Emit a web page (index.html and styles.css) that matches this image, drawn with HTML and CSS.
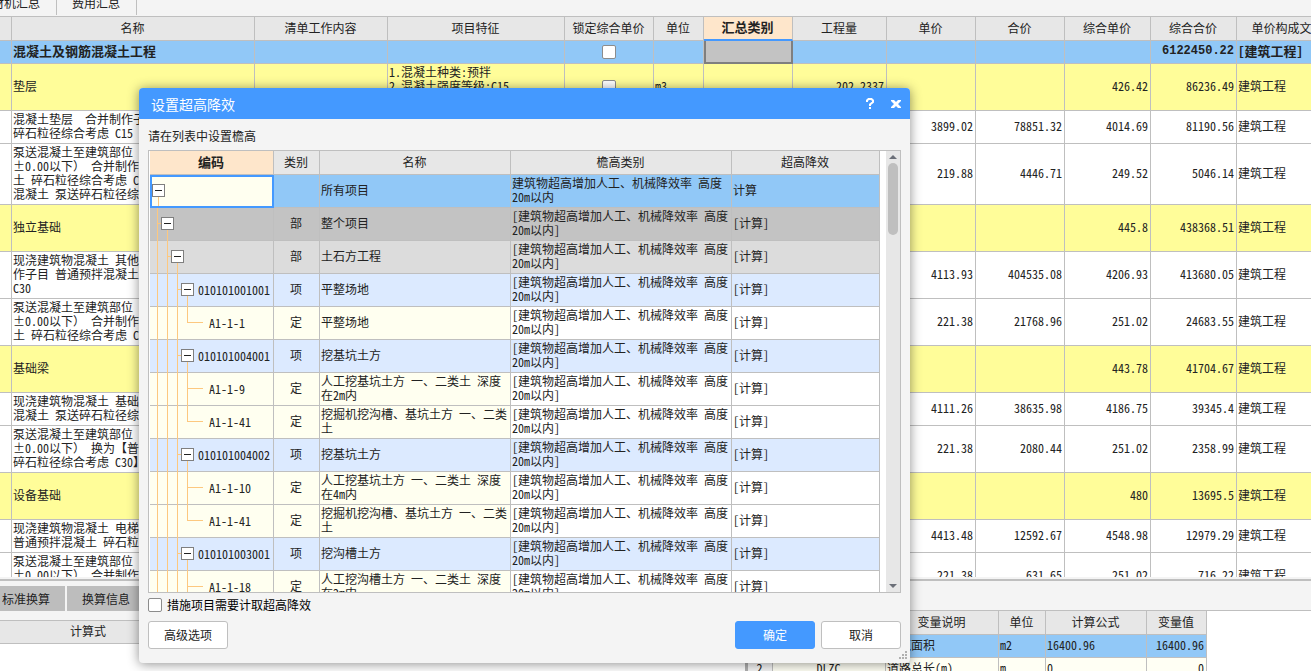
FILE: index.html
```html
<!DOCTYPE html>
<html lang="zh-CN">
<head>
<meta charset="utf-8">
<title>设置超高降效</title>
<link rel="stylesheet" href="styles.css">
</head>
<body>
<nav class="top-tabs">
  <button class="top-tab">人材机汇总</button>
  <button class="top-tab">费用汇总</button>
</nav>

<main class="sheet">
  <table class="grid sheet-grid">
    <colgroup>
      <col class="w12"><col class="w243"><col class="w133"><col class="w177"><col class="w89"><col class="w50"><col class="w89"><col class="w94"><col class="w89"><col class="w89"><col class="w86"><col class="w86"><col class="w103">
    </colgroup>
    <thead>
      <tr><th></th><th>名称</th><th>清单工作内容</th><th>项目特征</th><th>锁定综合单价</th><th>单位</th><th class="active">汇总类别</th><th>工程量</th><th>单价</th><th>合价</th><th>综合单价</th><th>综合合价</th><th>单价构成文件</th></tr>
    </thead>
    <tbody>
      <tr class="blue bold"><td></td><td>混凝土及钢筋混凝土工程</td><td></td><td></td><td class="mid"><input type="checkbox" class="check" aria-label="锁定综合单价"></td><td></td><td class="picked"></td><td></td><td></td><td></td><td></td><td class="num">6122450.22</td><td>[建筑工程]</td></tr>
      <tr class="yellow tall"><td></td><td>垫层</td><td></td><td>1.混凝土种类:预拌<br>2.混凝土强度等级:C15<br>&nbsp;</td><td class="mid"><input type="checkbox" class="check" aria-label="锁定综合单价"></td><td>m3</td><td></td><td class="num">202.2337</td><td></td><td></td><td class="num">426.42</td><td class="num">86236.49</td><td>建筑工程</td></tr>
      <tr><td></td><td>混凝土垫层&nbsp; 合并制作子目<br>碎石粒径综合考虑 C15</td><td></td><td></td><td></td><td></td><td></td><td></td><td class="num">3899.02</td><td class="num">78851.32</td><td class="num">4014.69</td><td class="num">81190.56</td><td>建筑工程</td></tr>
      <tr><td></td><td>泵送混凝土至建筑部位<br>±0.00以下） 合并制作<br>土 碎石粒径综合考虑 C<br>混凝土 泵送碎石粒径综合</td><td></td><td></td><td></td><td></td><td></td><td></td><td class="num">219.88</td><td class="num">4446.71</td><td class="num">249.52</td><td class="num">5046.14</td><td>建筑工程</td></tr>
      <tr class="yellow tall"><td></td><td>独立基础</td><td></td><td></td><td></td><td></td><td></td><td></td><td></td><td></td><td class="num">445.8</td><td class="num">438368.51</td><td>建筑工程</td></tr>
      <tr><td></td><td>现浇建筑物混凝土 其他<br>作子目 普通预拌混凝土<br>C30</td><td></td><td></td><td></td><td></td><td></td><td></td><td class="num">4113.93</td><td class="num">404535.08</td><td class="num">4206.93</td><td class="num">413680.05</td><td>建筑工程</td></tr>
      <tr><td></td><td>泵送混凝土至建筑部位<br>±0.00以下） 合并制作<br>土 碎石粒径综合考虑 C</td><td></td><td></td><td></td><td></td><td></td><td></td><td class="num">221.38</td><td class="num">21768.96</td><td class="num">251.02</td><td class="num">24683.55</td><td>建筑工程</td></tr>
      <tr class="yellow tall"><td></td><td>基础梁</td><td></td><td></td><td></td><td></td><td></td><td></td><td></td><td></td><td class="num">443.78</td><td class="num">41704.67</td><td>建筑工程</td></tr>
      <tr><td></td><td>现浇建筑物混凝土 基础<br>混凝土 泵送碎石粒径综合</td><td></td><td></td><td></td><td></td><td></td><td></td><td class="num">4111.26</td><td class="num">38635.98</td><td class="num">4186.75</td><td class="num">39345.4</td><td>建筑工程</td></tr>
      <tr><td></td><td>泵送混凝土至建筑部位<br>±0.00以下） 换为【普<br>碎石粒径综合考虑 C30】</td><td></td><td></td><td></td><td></td><td></td><td></td><td class="num">221.38</td><td class="num">2080.44</td><td class="num">251.02</td><td class="num">2358.99</td><td>建筑工程</td></tr>
      <tr class="yellow tall"><td></td><td>设备基础</td><td></td><td></td><td></td><td></td><td></td><td></td><td></td><td></td><td class="num">480</td><td class="num">13695.5</td><td>建筑工程</td></tr>
      <tr><td></td><td>现浇建筑物混凝土 电梯<br>普通预拌混凝土 碎石粒径</td><td></td><td></td><td></td><td></td><td></td><td></td><td class="num">4413.48</td><td class="num">12592.67</td><td class="num">4548.98</td><td class="num">12979.29</td><td>建筑工程</td></tr>
      <tr><td></td><td>泵送混凝土至建筑部位<br>±0.00以下） 合并制作<br>&nbsp;</td><td></td><td></td><td></td><td></td><td></td><td></td><td class="num">221.38</td><td class="num">631.65</td><td class="num">251.02</td><td class="num">716.22</td><td>建筑工程</td></tr>
    </tbody>
  </table>
</main>

<section class="lower">
  <div class="lower-left">
    <nav class="low-tabs"><button class="low-tab">标准换算</button><button class="low-tab">换算信息</button></nav>
    <table class="grid formula-grid"><colgroup><col class="w178"><col></colgroup><thead><tr><th>计算式</th><th></th></tr></thead></table>
  </div>
  <div class="lower-right">
    <table class="grid var-grid">
      <colgroup><col class="w25"><col class="w113"><col class="w113"><col class="w47"><col class="w101"><col class="w60"></colgroup>
      <thead><tr><th></th><th></th><th>变量说明</th><th>单位</th><th>计算公式</th><th>变量值</th></tr></thead>
      <tbody>
        <tr class="blue"><td></td><td></td><td>建筑面积</td><td>m2</td><td>16400.96</td><td class="num">16400.96</td></tr>
        <tr class="cream"><td class="mid index">2</td><td class="mid">DLZC</td><td>道路总长(m)</td><td>m</td><td>0</td><td class="num">0</td></tr>
      </tbody>
    </table>
  </div>
</section>

<div class="dialog" role="dialog" aria-labelledby="dialog-title">
  <header class="dialog-head">
    <h1 id="dialog-title">设置超高降效</h1>
    <button class="head-btn" aria-label="帮助"><svg width="8" height="12" viewBox="0 0 8 12"><path d="M1 4V2.5L2.500 1H5.500L7 2.500V4L4 6.500V8" fill="none" stroke="#fff" stroke-width="2"/><path d="M3 9h2v2H3z" fill="#fff"/></svg></button>
    <button class="head-btn" aria-label="关闭"><svg width="10" height="10" viewBox="0 0 10 10"><path d="M0 1h3l2 2 2-2h3v1L7 5l3 3v1H7L5 7 3 9H0V8l3-3-3-3z" fill="#fff"/></svg></button>
  </header>
  <p class="hint">请在列表中设置檐高</p>
  <div class="frame">
    <div class="frame-body">
      <table class="grid tree-grid">
        <colgroup><col class="w124"><col class="w46"><col class="w191"><col class="w221"><col></colgroup>
        <thead><tr><th class="active">编码</th><th>类别</th><th>名称</th><th>檐高类别</th><th>超高降效</th></tr></thead>
        <tbody>
          <tr class="blue"><td class="code editing"><div class="tree"><button class="toggle" aria-label="折叠"></button></div></td><td></td><td>所有项目</td><td>建筑物超高增加人工、机械降效率 高度<br>20m以内</td><td>计算</td></tr>
          <tr class="gray"><td class="code"><div class="tree"><i class="tee"></i><button class="toggle" aria-label="折叠"></button></div></td><td class="mid">部</td><td>整个项目</td><td>[建筑物超高增加人工、机械降效率 高度<br>20m以内]</td><td>[计算]</td></tr>
          <tr class="silver"><td class="code"><div class="tree"><i></i><i class="tee"></i><button class="toggle" aria-label="折叠"></button></div></td><td class="mid">部</td><td>土石方工程</td><td>[建筑物超高增加人工、机械降效率 高度<br>20m以内]</td><td>[计算]</td></tr>
          <tr class="pale"><td class="code"><div class="tree"><i></i><i></i><i class="tee"></i><button class="toggle" aria-label="折叠"></button>010101001001</div></td><td class="mid">项</td><td>平整场地</td><td>[建筑物超高增加人工、机械降效率 高度<br>20m以内]</td><td>[计算]</td></tr>
          <tr class="leaf"><td class="code"><div class="tree"><i></i><i></i><i></i><i class="tee long last"></i>A1-1-1</div></td><td class="mid">定</td><td>平整场地</td><td>[建筑物超高增加人工、机械降效率 高度<br>20m以内]</td><td>[计算]</td></tr>
          <tr class="pale"><td class="code"><div class="tree"><i></i><i></i><i class="tee"></i><button class="toggle" aria-label="折叠"></button>010101004001</div></td><td class="mid">项</td><td>挖基坑土方</td><td>[建筑物超高增加人工、机械降效率 高度<br>20m以内]</td><td>[计算]</td></tr>
          <tr class="leaf"><td class="code"><div class="tree"><i></i><i></i><i></i><i class="tee long"></i>A1-1-9</div></td><td class="mid">定</td><td>人工挖基坑土方 一、二类土 深度<br>在2m内</td><td>[建筑物超高增加人工、机械降效率 高度<br>20m以内]</td><td>[计算]</td></tr>
          <tr class="leaf"><td class="code"><div class="tree"><i></i><i></i><i></i><i class="tee long last"></i>A1-1-41</div></td><td class="mid">定</td><td>挖掘机挖沟槽、基坑土方 一、二类<br>土</td><td>[建筑物超高增加人工、机械降效率 高度<br>20m以内]</td><td>[计算]</td></tr>
          <tr class="pale"><td class="code"><div class="tree"><i></i><i></i><i class="tee"></i><button class="toggle" aria-label="折叠"></button>010101004002</div></td><td class="mid">项</td><td>挖基坑土方</td><td>[建筑物超高增加人工、机械降效率 高度<br>20m以内]</td><td>[计算]</td></tr>
          <tr class="leaf"><td class="code"><div class="tree"><i></i><i></i><i></i><i class="tee long"></i>A1-1-10</div></td><td class="mid">定</td><td>人工挖基坑土方 一、二类土 深度<br>在4m内</td><td>[建筑物超高增加人工、机械降效率 高度<br>20m以内]</td><td>[计算]</td></tr>
          <tr class="leaf"><td class="code"><div class="tree"><i></i><i></i><i></i><i class="tee long last"></i>A1-1-41</div></td><td class="mid">定</td><td>挖掘机挖沟槽、基坑土方 一、二类<br>土</td><td>[建筑物超高增加人工、机械降效率 高度<br>20m以内]</td><td>[计算]</td></tr>
          <tr class="pale"><td class="code"><div class="tree"><i></i><i></i><i class="tee"></i><button class="toggle" aria-label="折叠"></button>010101003001</div></td><td class="mid">项</td><td>挖沟槽土方</td><td>[建筑物超高增加人工、机械降效率 高度<br>20m以内]</td><td>[计算]</td></tr>
          <tr class="leaf"><td class="code"><div class="tree"><i></i><i></i><i></i><i class="tee long"></i>A1-1-18</div></td><td class="mid">定</td><td>人工挖沟槽土方 一、二类土 深度<br>在2m内</td><td>[建筑物超高增加人工、机械降效率 高度<br>20m以内]</td><td>[计算]</td></tr>
        </tbody>
      </table>
    </div>
    <div class="scrollbar">
      <svg width="8" height="4" viewBox="0 0 8 4"><path d="M4 0L8 4H0z" fill="#6b6f78"/></svg>
      <div class="thumb"></div>
      <svg width="8" height="4" viewBox="0 0 8 4"><path d="M0 0h8L4 4z" fill="#6b6f78"/></svg>
    </div>
  </div>
  <label class="option"><input type="checkbox" class="check">措施项目需要计取超高降效</label>
  <footer class="actions">
    <button class="btn advanced">高级选项</button>
    <button class="btn primary">确定</button>
    <button class="btn">取消</button>
  </footer>
  <svg class="grip" width="8" height="8" viewBox="0 0 8 8"><path d="M6 0h2v2H6zM3 3h2v2H3zM6 3h2v2H6zM0 6h2v2H0zM3 6h2v2H3zM6 6h2v2H6z" fill="#b0b0b0"/></svg>
</div>
</body>
</html>
```

FILE: styles.css
```css
* { box-sizing: border-box; }

body {
  margin: 0;
  height: 100vh;
  overflow: hidden;
  display: flex;
  flex-direction: column;
  position: relative;
  background: #f4f4f4;
  color: #222;
  font: 12px/14px "Noto Sans Mono CJK SC", "Noto Sans CJK SC", "Liberation Mono", monospace;
}

button { font: inherit; color: inherit; padding: 0; border: 0; background: none; }

/* tab strip above the sheet */
.top-tabs {
  display: flex;
  align-items: flex-end;
  flex: 0 0 15px;
  margin-left: -35px;
  overflow: hidden;
}
.top-tab { flex: none; height: 24px; padding: 0 16px 0 15px; border-right: 1px solid #bfbfbf; }

/* shared table look */
.grid { table-layout: fixed; border-collapse: separate; border-spacing: 0; }
.grid th, .grid td {
  padding: 1px 2px 3px 1px;
  border-right: 1px solid #bfbfbf;
  border-bottom: 1px solid #bfbfbf;
  white-space: nowrap;
  overflow: hidden;
  text-align: left;
}
.grid th { background: #e7e7e7; font-weight: normal; text-align: center; height: 24px; }
.grid th.active { background: #fee6cb; font-weight: bold; font-size: 13px; }
.grid .num { text-align: right; }
.grid .mid { text-align: center; }
.blue td { background: #91c8f7; }
.yellow td { background: #fffd99; }
.gray td { background: #c3c3c3; }
.silver td { background: #dcdcdc; }
.pale td { background: #dceaff; }
.cream td { background: #fffff4; }

.w12 { width: 12px; }
.w25 { width: 25px; }
.w46 { width: 46px; }
.w47 { width: 47px; }
.w50 { width: 50px; }
.w60 { width: 60px; }
.w86 { width: 86px; }
.w89 { width: 89px; }
.w94 { width: 94px; }
.w101 { width: 101px; }
.w103 { width: 103px; }
.w113 { width: 113px; }
.w124 { width: 124px; }
.w133 { width: 133px; }
.w177 { width: 177px; }
.w178 { width: 178px; }
.w191 { width: 191px; }
.w221 { width: 221px; }
.w243 { width: 243px; }

.check {
  appearance: none;
  width: 14px;
  height: 14px;
  margin: 0;
  border: 1px solid #8c8c8c;
  border-radius: 2px;
  background: #fff;
  vertical-align: middle;
}

/* main sheet */
.sheet { flex: 1; min-height: 0; margin-top: 1px; overflow: hidden; background: #fff; border-top: 1px solid #bfbfbf; }
.sheet-grid { width: 1340px; }
.sheet-grid tr.bold { height: 23px; }
.sheet-grid tr.tall { height: 47px; }
.grid .bold td { padding-top: 0; padding-bottom: 2px; font-weight: bold; font-size: 13px; }
.grid .bold .num { font-family: "Liberation Mono", monospace; font-size: 12px; }
.grid .bold .picked { background: #c3c3c3; border: 2px solid #7f7f7f; border-top: 0; }
.sheet-grid th.active { border-bottom: 2px solid #4499ff; }

/* lower panes */
.lower { flex: 0 0 92px; display: flex; margin-top: 2px; border-top: 2px solid #bfbfbf; overflow: hidden; }
.lower-left { flex: 0 0 745px; background: #fff; }
.low-tabs { display: flex; gap: 2px; margin-left: -13px; padding: 5px 0 9px; background: #f4f4f4; }
.low-tab { height: 25px; padding: 0 15px; background: #bdbdbd; }
.formula-grid { width: 100%; }
.formula-grid th { border-top: 1px solid #bfbfbf; }
.lower-right { flex: 1; margin-top: 29px; background: #fff; border-top: 1px solid #bfbfbf; border-left: 3px solid #b0b0b0; }
.var-grid { width: 459px; }
.var-grid tr { height: 23px; }
.grid .index { background: #f4f4f4; }

/* floating dialog window */
.dialog {
  position: absolute;
  left: 139px;
  top: 88px;
  width: 771px;
  height: 575px;
  display: flex;
  flex-direction: column;
  border-radius: 4px;
  background: #f4f4f4;
  box-shadow: 0 1px 12px rgba(0, 0, 0, .45);
}
.dialog-head {
  flex: 0 0 31px;
  display: flex;
  align-items: center;
  gap: 8px;
  padding: 0 5px 0 12px;
  border-radius: 4px 4px 0 0;
  background: #4499ff;
  color: #fff;
}
.dialog-head h1 { flex: 1; margin: 0; font-size: 14px; line-height: 20px; font-weight: normal; }
.head-btn { width: 18px; height: 18px; display: grid; place-items: center; }
.hint { margin: 0; padding: 10px 9px 7px; }
.frame { flex: 1; min-height: 0; margin: 0 9px; display: flex; border: 1px solid #bfbfbf; background: #fff; }
.frame-body { flex: 1; min-width: 0; overflow: hidden; padding: 0 6px 0 1px; }
.tree-grid { width: 100%; }
.tree-grid tbody tr { height: 33px; }
.tree-grid .leaf td:nth-child(-n+3) { background: #fffff0; }
.grid td.code { padding: 0 0 0 2px; overflow: visible; }
.grid td.editing { padding-left: 0; background: #fffff0; border: 2px solid #4499ff; }

.tree { display: flex; align-items: center; height: 31px; margin-bottom: 1px; }
.tree i {
  flex: none;
  align-self: flex-start;
  width: 10px;
  height: 33px;
  background: linear-gradient(#fdc87f, #fdc87f) 5px 0 / 1px 100% no-repeat;
}
.tree .tee {
  background:
    linear-gradient(#fdc87f, #fdc87f) 5px 0 / 1px 100% no-repeat,
    linear-gradient(#fdc87f, #fdc87f) 5px 15px / 20px 1px no-repeat;
}
.tree .long { width: 22px; margin-right: 5px; background-size: 1px 100%, 16px 1px; }
.tree .last { background-size: 1px 16px, 16px 1px; }
.toggle {
  flex: none;
  position: relative;
  width: 13px;
  height: 13px;
  margin: 0 4px 0 -1px;
  border: 1px solid #7f7f7f;
  background: linear-gradient(#222, #222) center / 7px 1px no-repeat #fff;
}
.toggle::after {
  content: "";
  position: absolute;
  left: 5px;
  top: 12px;
  width: 1px;
  height: 11px;
  background: #fdc87f;
}
.editing .tree { height: 27px; margin: 0 0 2px; }
.editing .toggle { margin-left: 0; }
.editing .toggle::after { height: 9px; }

.scrollbar {
  flex: 0 0 14px;
  display: flex;
  flex-direction: column;
  align-items: center;
  padding: 4px 0;
  background: #e7e7e7;
}
.thumb { width: 10px; height: 72px; margin: 4px 0 auto; border-radius: 5px; background: #bfbfbf; }

.option { display: flex; align-items: center; gap: 5px; padding: 5px 9px 0; color: #000; }
.actions { display: flex; gap: 6px; padding: 9px 9px 14px; }
.btn { width: 80px; height: 28px; border: 1px solid #bfbfbf; border-radius: 3px; background: #fff; }
.btn.advanced { margin-right: auto; }
.btn.primary { border-color: #4499ff; background: #4499ff; color: #fff; }
.grip { position: absolute; right: 3px; bottom: 4px; }
```
